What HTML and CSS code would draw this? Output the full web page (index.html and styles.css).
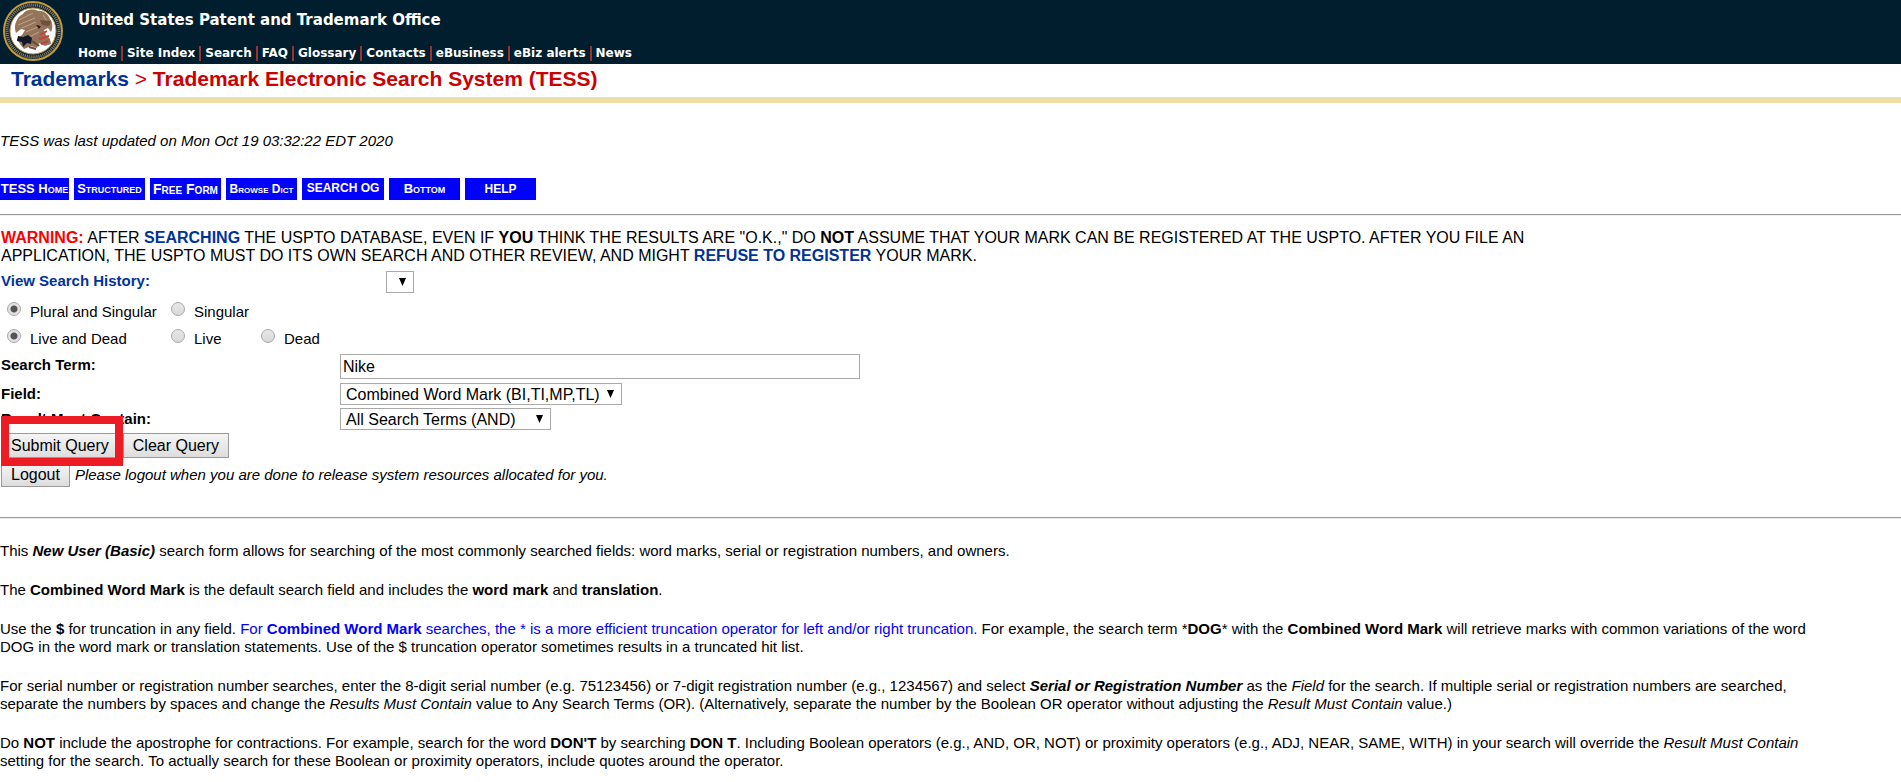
FILE: index.html
```
<!DOCTYPE html>
<html lang="en">
<head>
    <meta charset="UTF-8">
    <meta name="viewport" content="width=device-width, initial-scale=1.0">
    <title>Trademark Electronic Search System (TESS)</title>
    <link rel="stylesheet" href="styles.css">
</head>
<body>
    <header class="site-header">
        <svg class="seal" viewBox="0 0 60 60" aria-hidden="true">
            <circle cx="30" cy="30" r="29" fill="#18242c" stroke="#c39a3c" stroke-width="2"/>
            <circle cx="30" cy="30" r="26" fill="none" stroke="#8a8468" stroke-width="3" stroke-dasharray="1 1"/>
            <circle cx="30" cy="30" r="23" fill="#fff" stroke="#b39a5e" stroke-width="1"/>
            <path d="M13 32 C10 24 14 16 20 13 C22 9 30 7 35 10 C40 9 45 13 47 18 C50 22 50 27 48 31 L45 27 L41 29 L43 34 L47 38 L48 43 L42 45 L36 42 L34 47 L28 45 L21 48 L17 43 L14 38 L19 34 L22 29 L18 28 Z" fill="#94745a"/>
            <path d="M16 19 L30 12 M15 24 L32 17 M19 27 L33 21 M23 31 L35 26 M26 36 L36 31 M40 14 L45 22" stroke="#bfa58a" stroke-width="1" fill="none"/>
            <path d="M33 24 L38 25 L36 28 Z" fill="#2a1d19"/>
            <path d="M37 19 L48 20 L46 25 L39 24 Z" fill="#70503c"/>
            <path d="M15 35 L20 36 L25 34 L29 37 L28 43 L24 42 L20 46 L19 41 L14 40 Z" fill="#12172a"/>
            <path d="M37 34 L44 30 M36 38 L46 35 M38 43 L45 40" stroke="#c4423c" stroke-width="2" fill="none"/>
            <path d="M29 40 L36 45 M26 46 L33 48" stroke="#6b4a37" stroke-width="2" fill="none"/>
        </svg>
        <div class="site-titles">
            <div class="site-name">United States Patent and Trademark Office</div>
            <nav class="site-nav">
                <a href="#">Home</a>
                <a href="#">Site Index</a>
                <a href="#">Search</a>
                <a href="#">FAQ</a>
                <a href="#">Glossary</a>
                <a href="#">Contacts</a>
                <a href="#">eBusiness</a>
                <a href="#">eBiz alerts</a>
                <a href="#">News</a>
            </nav>
        </div>
    </header>
    <h1 class="page-title"><a href="#">Trademarks</a> <span class="arrow">&gt;</span> Trademark Electronic Search System (TESS)</h1>

    <main>
        <p class="updated">TESS was last updated on Mon Oct 19 03:32:22 EDT 2020</p>

        <nav class="tabs">
            <a href="#" class="home">TESS Home</a>
            <a href="#">Structured</a>
            <a href="#" class="free">Free Form</a>
            <a href="#" class="browse">Browse Dict</a>
            <a href="#" class="og">SEARCH OG</a>
            <a href="#">Bottom</a>
            <a href="#" class="last">HELP</a>
        </nav>
        <hr>

        <form class="search-form" onsubmit="return false">
            <p class="warning"><b class="red">WARNING:</b> AFTER <a href="#">SEARCHING</a> THE USPTO DATABASE, EVEN IF <b>YOU</b> THINK THE RESULTS ARE "O.K.," DO <b>NOT</b> ASSUME THAT YOUR MARK CAN BE REGISTERED AT THE USPTO. AFTER YOU FILE AN APPLICATION, THE USPTO MUST DO ITS OWN SEARCH AND OTHER REVIEW, AND MIGHT <a href="#">REFUSE TO REGISTER</a> YOUR MARK.</p>

            <div class="history">
                <label for="history"><a href="#">View Search History:</a></label>
                <select id="history"><option></option></select>
            </div>

            <div class="radios">
                <label><input type="radio" name="plural" checked>Plural and Singular</label>
                <label><input type="radio" name="plural">Singular</label>
            </div>
            <div class="radios">
                <label><input type="radio" name="live" checked>Live and Dead</label>
                <label><input type="radio" name="live">Live</label>
                <label><input type="radio" name="live">Dead</label>
            </div>

            <div class="fields">
                <label for="term">Search Term:</label>
                <input type="text" id="term" value="Nike">
                <label for="field">Field:</label>
                <select id="field" class="field-select"><option>Combined Word Mark (BI,TI,MP,TL)</option></select>
                <label for="contain">Result Must Contain:</label>
                <select id="contain" class="contain-select"><option>All Search Terms (AND)</option></select>
            </div>

            <div class="buttons">
                <span class="marked"><button type="submit">Submit Query</button></span>
                <button type="reset">Clear Query</button>
            </div>
            <div class="logout">
                <button type="button">Logout</button>
                <i>Please logout when you are done to release system resources allocated for you.</i>
            </div>
        </form>
        <hr>

        <div class="help">
            <p>This <b><i>New User (Basic)</i></b> search form allows for searching of the most commonly searched fields: word marks, serial or registration numbers, and owners.</p>
            <p>The <b>Combined Word Mark</b> is the default search field and includes the <b>word mark</b> and <b>translation</b>.</p>
            <p>Use the <b>$</b> for truncation in any field. <span class="blue">For <b>Combined Word Mark</b> searches, the * is a more efficient truncation operator for left and/or right truncation.</span> For example, the search term *<b>DOG</b>* with the <b>Combined Word Mark</b> will retrieve marks with common variations of the word DOG in the word mark or translation statements. Use of the $ truncation operator sometimes results in a truncated hit list.</p>
            <p>For serial number or registration number searches, enter the 8-digit serial number (e.g. 75123456) or 7-digit registration number (e.g., 1234567) and select <b><i>Serial or Registration Number</i></b> as the <i>Field</i> for the search. If multiple serial or registration numbers are searched, separate the numbers by spaces and change the <i>Results Must Contain</i> value to Any Search Terms (OR). (Alternatively, separate the number by the Boolean OR operator without adjusting the <i>Result Must Contain</i> value.)</p>
            <p>Do <b>NOT</b> include the apostrophe for contractions. For example, search for the word <b>DON'T</b> by searching <b>DON T</b>. Including Boolean operators (e.g., AND, OR, NOT) or proximity operators (e.g., ADJ, NEAR, SAME, WITH) in your search will override the <i>Result Must Contain</i> setting for the search. To actually search for these Boolean or proximity operators, include quotes around the operator.</p>
        </div>
    </main>
</body>
</html>
```
FILE: styles.css
```
* {
    box-sizing: border-box;
}
body {
    margin: 0;
    background-color: #fff;
    color: #000;
    font-family: Arial, "Liberation Sans", sans-serif;
    font-size: 16px;
    line-height: 18px;
}
a {
    text-decoration: none;
    color: #039;
}
p {
    margin: 0;
}
hr {
    margin: 0;
    border: 0;
    border-top: 1px solid #9a9a9a;
    border-bottom: 1px solid #eee;
}

/* header */
.site-header {
    display: flex;
    height: 64px;
    padding-left: 3px;
    background-color: #001e2e;
    font-family: Verdana, "DejaVu Sans", sans-serif;
    font-weight: bold;
    color: #fff;
}
.seal {
    flex: none;
    width: 60px;
    height: 60px;
    margin-top: 1px;
}
.site-titles {
    padding: 10px 0 0 15px;
}
.site-name {
    font-size: 15px;
    line-height: 20px;
}
.site-nav {
    display: flex;
    margin-top: 16px;
    font-size: 12px;
    line-height: 15px;
}
.site-nav a {
    color: #fff;
    padding-right: 4px;
}
.site-nav a + a {
    border-left: 2px solid #933;
    padding-left: 4px;
}
.page-title {
    margin: 0;
    padding: 3px 0 6px 11px;
    border-bottom: 6px solid #eedfa8;
    font-size: 21px;
    line-height: 24px;
    color: #c00;
}
.page-title .arrow {
    font-weight: normal;
}

/* tabs */
.updated {
    padding: 29px 0 28px;
    font-size: 15px;
    font-style: italic;
}
.tabs {
    display: flex;
    gap: 5px;
    margin-bottom: 14px;
}
.tabs a {
    width: 71px;
    height: 22px;
    background-color: #00f;
    color: #fff;
    font-size: 13px;
    font-weight: bold;
    font-variant: small-caps;
    line-height: 22px;
    text-align: center;
    white-space: nowrap;
}
.tabs .home {
    width: 69px;
}
.tabs .free {
    font-size: 14px;
}
.tabs .browse,
.tabs .last {
    font-size: 12px;
}
.tabs .og {
    width: 82px;
    font-size: 12px;
    line-height: 20px;
}

/* form */
.search-form {
    padding: 13px 0 30px 1px;
}
.warning {
    max-width: 1540px;
}
.warning a {
    font-weight: bold;
}
.red {
    color: #f00;
}
.history {
    display: grid;
    grid-template-columns: 385px auto;
    justify-content: start;
    margin-top: 6px;
    font-size: 15px;
    font-weight: bold;
    line-height: 20px;
}
select {
    appearance: none;
    height: 22px;
    padding: 0 5px;
    border: 1px solid #a9a9a9;
    border-radius: 0;
    background: #fff url("data:image/svg+xml,%3Csvg xmlns='http://www.w3.org/2000/svg' width='7' height='8'%3E%3Cpath d='M0 0h7L3.5 8z'/%3E%3C/svg%3E") no-repeat right 7px center;
    color: #000;
    font-family: inherit;
    font-size: 16px;
}
#history {
    width: 28px;
}
.radios {
    display: grid;
    grid-template-columns: 164px 90px auto;
    justify-content: start;
    height: 27px;
    padding: 0 0 0 6px;
    font-size: 15px;
}
.history + .radios {
    margin-top: 7px;
}
.radios label {
    display: flex;
    gap: 9px;
    line-height: 24px;
}
input[type="radio"] {
    appearance: none;
    width: 14px;
    height: 14px;
    margin: 2px 0 0;
    border: 1px solid #aaa;
    border-radius: 50%;
    background: linear-gradient(#e8e8e8, #d8d8d8);
}
input[type="radio"]:checked {
    background: radial-gradient(circle, #555 3px, #e2e2e2 4px);
}
.fields {
    display: grid;
    grid-template-columns: 339px 1fr;
    grid-template-rows: 29px 25px 25px;
    align-items: start;
    justify-items: start;
    font-size: 15px;
    font-weight: bold;
}
.fields label {
    line-height: 22px;
}
input[type="text"] {
    width: 520px;
    height: 25px;
    padding: 1px 2px;
    border: 1px solid #a9a9a9;
    font-family: inherit;
    font-size: 16px;
}
.field-select {
    width: 282px;
}
.contain-select {
    width: 211px;
}
button {
    height: 25px;
    padding: 0 9px;
    border: 1px solid #999;
    background: linear-gradient(#f5f5f5, #ddd);
    color: #000;
    font-family: inherit;
    font-size: 16px;
}
.buttons {
    display: flex;
    gap: 4px;
}
.marked {
    position: relative;
}
/* red frame lies over the rows around the button */
.marked::after {
    content: "";
    position: absolute;
    top: -17px;
    right: -4px;
    bottom: -8px;
    left: 0;
    border: 8px solid #ed1c24;
    pointer-events: none;
}
.logout {
    display: flex;
    align-items: center;
    gap: 5px;
    margin-top: 4px;
    font-size: 15px;
}

/* help text */
.help {
    max-width: 1840px;
    padding-top: 23px;
    font-size: 15px;
}
.help p {
    margin-bottom: 21px;
}
.blue {
    color: #00f;
}
```
